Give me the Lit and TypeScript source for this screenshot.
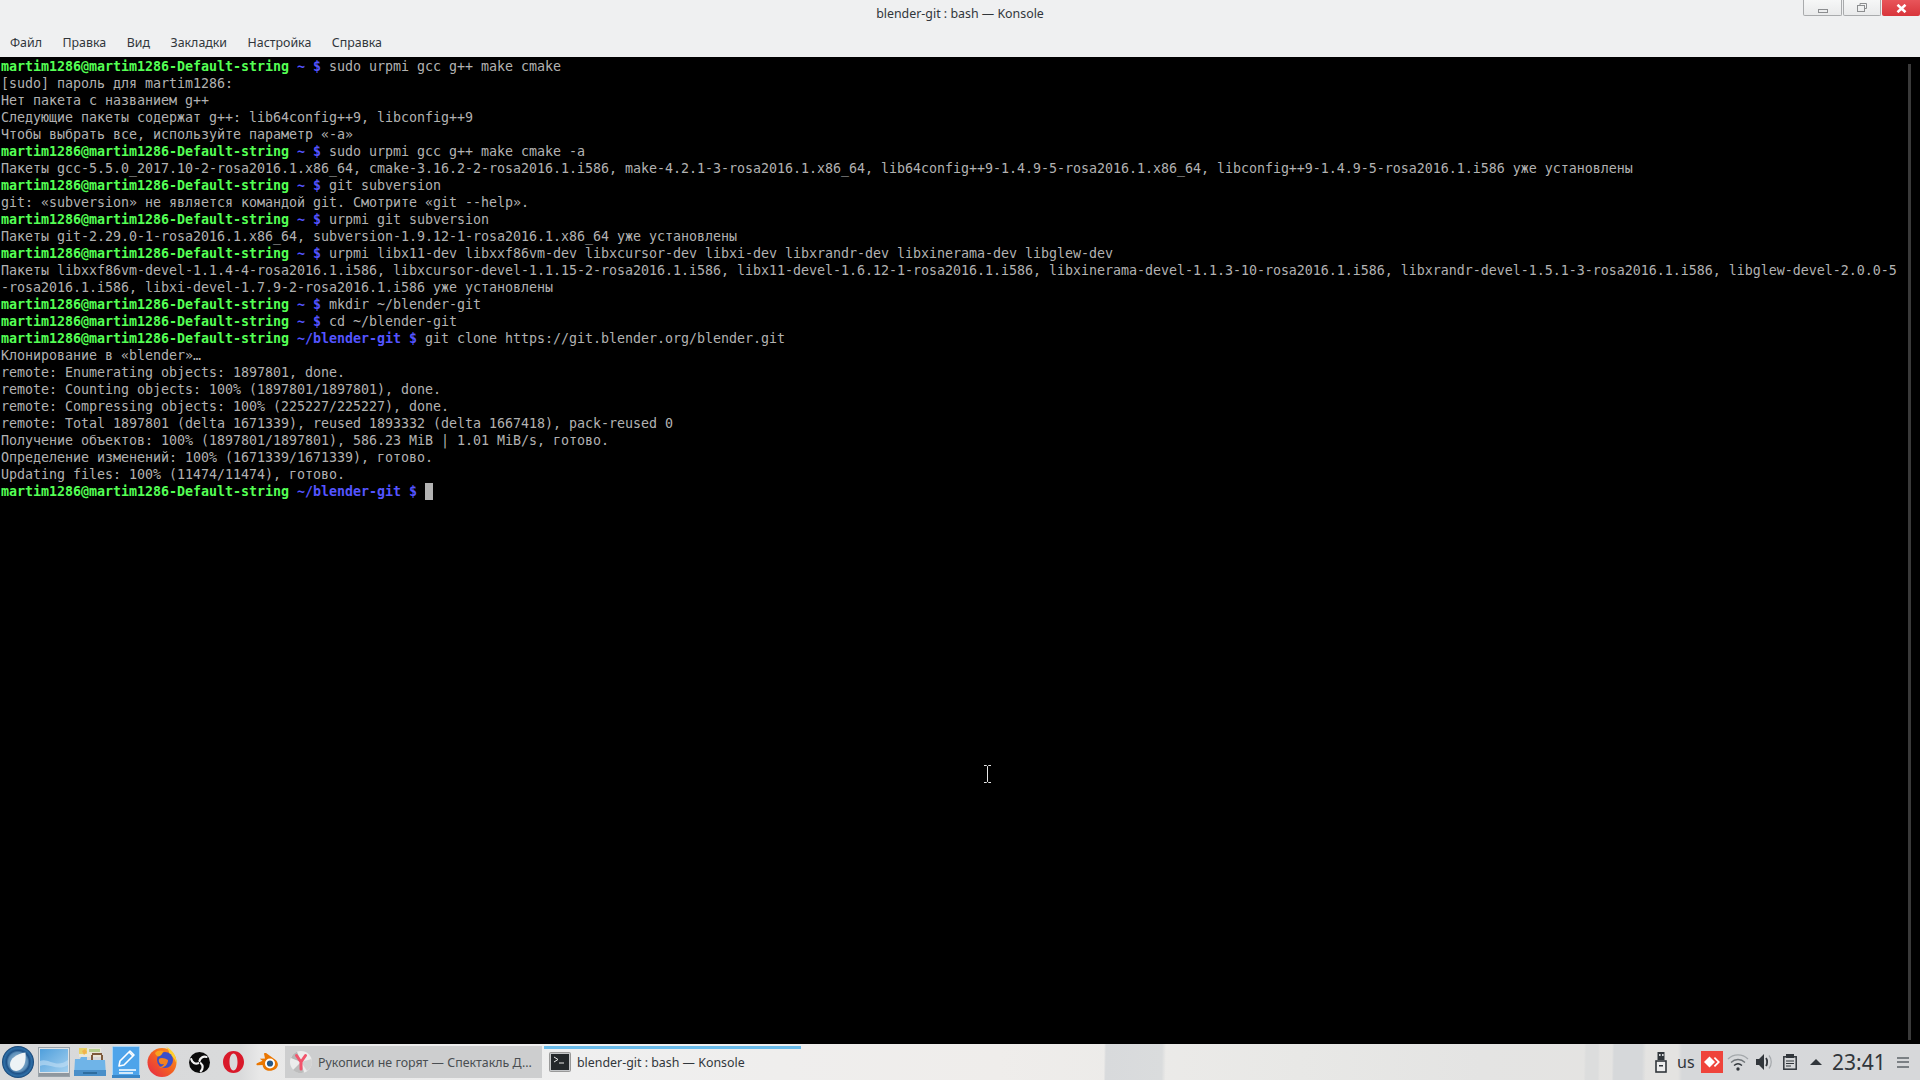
import { LitElement, html, css } from "lit";
import { customElement } from "lit/decorators.js";

type Line = string | { p: string; cmd?: string; cursor?: boolean };

const LINES: Line[] = [
  { p: "~", cmd: "sudo urpmi gcc g++ make cmake" },
  "[sudo] пароль для martim1286:",
  "Нет пакета с названием g++",
  "Следующие пакеты содержат g++: lib64config++9, libconfig++9",
  "Чтобы выбрать все, используйте параметр «-a»",
  { p: "~", cmd: "sudo urpmi gcc g++ make cmake -a" },
  "Пакеты gcc-5.5.0_2017.10-2-rosa2016.1.x86_64, cmake-3.16.2-2-rosa2016.1.i586, make-4.2.1-3-rosa2016.1.x86_64, lib64config++9-1.4.9-5-rosa2016.1.x86_64, libconfig++9-1.4.9-5-rosa2016.1.i586 уже установлены",
  { p: "~", cmd: "git subversion" },
  "git: «subversion» не является командой git. Смотрите «git --help».",
  { p: "~", cmd: "urpmi git subversion" },
  "Пакеты git-2.29.0-1-rosa2016.1.x86_64, subversion-1.9.12-1-rosa2016.1.x86_64 уже установлены",
  { p: "~", cmd: "urpmi libx11-dev libxxf86vm-dev libxcursor-dev libxi-dev libxrandr-dev libxinerama-dev libglew-dev" },
  "Пакеты libxxf86vm-devel-1.1.4-4-rosa2016.1.i586, libxcursor-devel-1.1.15-2-rosa2016.1.i586, libx11-devel-1.6.12-1-rosa2016.1.i586, libxinerama-devel-1.1.3-10-rosa2016.1.i586, libxrandr-devel-1.5.1-3-rosa2016.1.i586, libglew-devel-2.0.0-5",
  "-rosa2016.1.i586, libxi-devel-1.7.9-2-rosa2016.1.i586 уже установлены",
  { p: "~", cmd: "mkdir ~/blender-git" },
  { p: "~", cmd: "cd ~/blender-git" },
  { p: "~/blender-git", cmd: "git clone https://git.blender.org/blender.git" },
  "Клонирование в «blender»…",
  "remote: Enumerating objects: 1897801, done.",
  "remote: Counting objects: 100% (1897801/1897801), done.",
  "remote: Compressing objects: 100% (225227/225227), done.",
  "remote: Total 1897801 (delta 1671339), reused 1893332 (delta 1667418), pack-reused 0",
  "Получение объектов: 100% (1897801/1897801), 586.23 MiB | 1.01 MiB/s, готово.",
  "Определение изменений: 100% (1671339/1671339), готово.",
  "Updating files: 100% (11474/11474), готово.",
  { p: "~/blender-git", cursor: true },
];

const MENU = ["Файл", "Правка", "Вид", "Закладки", "Настройка", "Справка"];

const launcherIcon = html`<svg width="32" height="32" viewBox="0 0 32 32"><defs><radialGradient id="lg" cx=".5" cy=".5" r=".5"><stop offset="0" stop-color="#aac6dc"/><stop offset=".6" stop-color="#5d8fb9"/><stop offset=".72" stop-color="#1f5288"/><stop offset=".88" stop-color="#2f70a8"/><stop offset="1" stop-color="#123f70"/></radialGradient></defs><circle cx="16" cy="16" r="16" fill="url(#lg)"/><path d="M23.500 6.500C24 13 23.500 20 18.500 23.500C14 26.500 8 24.500 8 18.500C8 12.500 15 7.500 23.500 6.500Z" fill="#eef3f6"/></svg>`;
const desktopIcon = html`<svg width="32" height="30" viewBox="0 0 32 30"><defs><linearGradient id="dg" x1="0" y1="0" x2="1" y2="1"><stop offset="0" stop-color="#4f9fdc"/><stop offset="1" stop-color="#a4d0ef"/></linearGradient></defs><rect x=".5" y=".5" width="31" height="29" fill="#dfe3e6" stroke="#9aa3aa"/><rect x="2" y="2" width="28" height="23" fill="url(#dg)"/><path d="M2 14C10 10 18 22 30 13V18C20 25 10 15 2 19Z" fill="#c3e0f5" opacity=".6"/><rect x="1" y="26" width="30" height="3" fill="#8f979e"/></svg>`;
const folderIcon = html`<svg width="32" height="32" viewBox="0 0 32 32"><path d="M5 11V2H27V11Z" fill="#e8e6d8"/><path d="M5 2H13V8H5Z" fill="#e8d36a"/><path d="M8 5L11 3L13 6L10 9Z" fill="#f2b24a"/><rect x="15" y="3" width="11" height="3" fill="#b5cd8c"/><path d="M18 9V14M28 9V14" stroke="#7d5a3c" stroke-width="2"/><path d="M18 8H28" stroke="#7d5a3c" stroke-width="2"/><path d="M1 13L6 13L7 11L13 11V14L31 14L32 30H0Z" fill="#6fb4e8"/><path d="M0 24H32V30H0Z" fill="#4a8fc9"/><rect x="9" y="26" width="14" height="2" fill="#2f6d9f"/></svg>`;
const editIcon = html`<svg width="28" height="32" viewBox="0 0 28 32"><rect x=".5" y=".5" width="27" height="31" rx="1" fill="#4ea4ea" stroke="#a9d4f4"/><path d="M7 20L8 15L18 5L22 9L12 19Z" fill="#4ea4ea" stroke="#fff" stroke-width="1.600" stroke-linejoin="round"/><path d="M17 6L21 10" stroke="#fff" stroke-width="1.600"/><path d="M7 24H24M7 27H21" stroke="#fff" stroke-width="1.300"/><rect x="0" y="29" width="28" height="3" fill="#3a86c6"/></svg>`;
const firefoxIcon = html`<svg width="30" height="30" viewBox="0 0 30 30"><defs><linearGradient id="ff" x1="0" y1="1" x2="1" y2="0"><stop offset="0" stop-color="#e6254a"/><stop offset=".55" stop-color="#f4651f"/><stop offset="1" stop-color="#ff9c1f"/></linearGradient></defs><circle cx="15" cy="15.500" r="14.500" fill="url(#ff)"/><path d="M19 0C25 2 30 9 29.500 17C28 11 25 9 22 8C23 5 21 2 19 0Z" fill="#ffcf2e"/><circle cx="18" cy="13" r="8" fill="#3a4fc8"/><path d="M8 6C10 3 14 3 17 4C15 6 15 8 13 9C11 10 9 9 8 6Z" fill="#f9a11e"/><path d="M12 12C14 10 18 11 21 13C21 18 17 21 12 21C15 19 17 18 17 17C14 18 11 16 12 12Z" fill="#f4821f"/></svg>`;
const obsIcon = html`<svg width="21" height="21" viewBox="0 0 21 21"><circle cx="10.500" cy="10.500" r="10.500" fill="#0a0a0a"/><g fill="none" stroke="#f2f2f2" stroke-width="2.200" stroke-linecap="round"><path d="M10.500 9C11 6 14 4 17.500 5"/><path d="M10.500 9C11 6 14 4 17.500 5" transform="rotate(120 10.500 10.500)"/><path d="M10.500 9C11 6 14 4 17.500 5" transform="rotate(240 10.500 10.500)"/></g></svg>`;
const operaIcon = html`<svg width="21" height="22" viewBox="0 0 21 22"><path fill-rule="evenodd" d="M10.500 0C16.300 0 21 4.900 21 11S16.300 22 10.500 22S0 17.100 0 11S4.700 0 10.500 0ZM10.500 2.600C8 2.600 6.500 6.300 6.500 11S8 19.400 10.500 19.400S14.500 15.700 14.500 11S13 2.600 10.500 2.600Z" fill="#d9192a"/></svg>`;
const blenderIcon = html`<svg width="23" height="18" viewBox="0 0 23 18"><path d="M10 0L19 6.500C22.500 9 23 13.500 19.500 16C16 18.500 10.500 18.500 8 15.500C7 14.200 6.600 13.200 6.700 12L1.500 12.200C.3 12.200 0 10.800 1 10.300L6.500 7.800L3.800 5.800L9 5.600L8 .8C8.200 0 9.300-.3 10 0Z" fill="#ea7600"/><circle cx="14" cy="10.500" r="5" fill="#fff"/><circle cx="14" cy="10.500" r="3.100" fill="#265787"/></svg>`;
const yandexIcon = html`<svg width="22" height="22" viewBox="0 0 22 22"><circle cx="11" cy="11" r="11" fill="#ececec"/><path d="M1 7A11 11 0 0 1 7 .8L11 11Z" fill="#b5b5b5"/><path d="M3 19L11 11L14 21.500A11 11 0 0 1 3 19Z" fill="#bdbdbd"/><path d="M11 11L21.500 8A11 11 0 0 1 17 20Z" fill="#d2d2d2"/><path d="M6.500 4.500L11 11L15.500 4.500M11 11V18" fill="none" stroke="#f2546c" stroke-width="3" stroke-linecap="round" stroke-linejoin="round"/></svg>`;
const konsoleIcon = html`<svg width="22" height="20" viewBox="0 0 22 20"><rect x=".5" y=".5" width="21" height="19" rx="1" fill="#c4c6c8" stroke="#999"/><rect x="2" y="2" width="18" height="16" fill="#24282b"/><path d="M5 5L9 7.500L5 10" fill="none" stroke="#e8e8e8" stroke-width="1"/><path d="M10 11H15" stroke="#e8e8e8" stroke-width="1"/></svg>`;
const usbIcon = html`<svg width="12" height="22" viewBox="0 0 12 22"><path d="M2.500 1H9.500V9H2.500Z" fill="#31363b"/><rect x="4" y="3" width="1.600" height="2" fill="#d6d7d9"/><rect x="7" y="3" width="1.600" height="2" fill="#d6d7d9"/><rect x="1" y="10" width="10" height="11" fill="#eee" stroke="#31363b" stroke-width="1.600"/><rect x="4" y="14" width="4" height="1.500" fill="#31363b"/></svg>`;
const anydeskIcon = html`<svg width="22" height="22" viewBox="0 0 22 22"><rect width="22" height="22" fill="#ef443b"/><path d="M8.500 5.500L14 11L8.500 16.500L3 11Z" fill="#fff"/><path d="M14 6L19 11L14 16L12.800 14.800L16.600 11L12.800 7.200Z" fill="#fff"/></svg>`;
const wifiIcon = html`<svg width="22" height="18" viewBox="0 0 22 18"><path d="M1 6C6.500.5 15.500.5 21 6" fill="none" stroke="#a4a8ab" stroke-width="1.300"/><path d="M4 9.500C8 5.500 14 5.500 18 9.500" fill="none" stroke="#6f7478" stroke-width="1.300"/><path d="M7 12.500C9.500 10.300 12.500 10.300 15 12.500" fill="none" stroke="#31363b" stroke-width="1.300"/><circle cx="11" cy="16" r="1.700" fill="#31363b"/></svg>`;
const volumeIcon = html`<svg width="17" height="16" viewBox="0 0 17 16"><path d="M0 5H3L8 0V16L3 11H0Z" fill="#31363b"/><path d="M10 4C11.500 6 11.500 10 10 12" fill="none" stroke="#31363b" stroke-width="1.800"/><path d="M13 1.500C16 5 16 11 13 14.500" fill="none" stroke="#a4a8ab" stroke-width="1.200"/></svg>`;
const clipIcon = html`<svg width="14" height="16" viewBox="0 0 14 16"><rect x=".8" y="2.800" width="12.400" height="12.400" fill="none" stroke="#31363b" stroke-width="1.500"/><rect x="3" y="0" width="8" height="4" fill="#31363b"/><path d="M3 7H11M3 9.500H11M3 12H8" stroke="#31363b" stroke-width="1.200"/></svg>`;

@customElement("app-root")
export class AppRoot extends LitElement {
  static styles = css`
    :host {
      display: flex;
      flex-direction: column;
      width: 1920px;
      height: 1080px;
      overflow: hidden;
      position: relative;
      font-family: "Noto Sans", sans-serif;
      font-size: 12.4px;
      color: #31363b;
      background: #eff0f1;
    }
    .titlebar {
      height: 28px;
      display: grid;
      grid-template-columns: 1fr auto 1fr;
      align-items: start;
    }
    .title { line-height: 27px; }
    .winbtns { justify-self: end; display: flex; gap: 1px; height: 16px; }
    .wb {
      width: 38px;
      height: 16px;
      box-sizing: border-box;
      border: 1px solid #a9abad;
      border-top: none;
      border-radius: 0 0 2px 2px;
      background: linear-gradient(#f6f7f7, #e9eaeb);
      display: flex;
      align-items: center;
      justify-content: center;
    }
    .wb.first { width: 39px; }
    .wb.close {
      border: none;
      background: linear-gradient(#e8555a, #d8353b);
    }
    .menubar {
      height: 28px;
      padding: 0 0 1px 10px;
      display: flex;
      gap: 20.5px;
      align-items: center;
    }
    .term {
      flex: 1;
      background: #000;
      padding: 1px 0 0 1px;
      font-family: "DejaVu Sans Mono", monospace;
      font-size: 13.33px;
      letter-spacing: -0.025px;
      line-height: 17px;
      color: #b2b2b2;
      position: relative;
      overflow: hidden;
    }
    .line { height: 17px; white-space: pre; }
    .g { color: #54ff54; font-weight: 700; }
    .b { color: #5454ff; font-weight: 700; }
    .cur {
      display: inline-block;
      width: 8px;
      height: 17px;
      background: #b2b2b2;
      vertical-align: top;
    }
    .scroll {
      position: absolute;
      left: 1908px;
      top: 7px;
      bottom: 4px;
      width: 3px;
      background: #3a3a3a;
    }
    .ibeam { position: absolute; left: 983px; top: 708px; }
    .taskbar {
      height: 36px;
      display: flex;
      align-items: center;
      background:
        linear-gradient(91deg, transparent 1104px, #d8dadc 1106px, #dadcdd 1162px, transparent 1166px),
        linear-gradient(91deg, transparent 1584px, #dcdddd 1586px, #dcdddd 1598px, transparent 1600px),
        linear-gradient(91deg, transparent 1612px, #d6d8da 1614px, #d6d8da 1642px, transparent 1646px),
        linear-gradient(90deg, #d8d9da 0, #d9dadb 240px, #e8e8e8 260px, #efefef 560px, #efedeb 1000px, #e8e8e6 1300px, #e4e4e3 1480px, #e4e3e1 1678px, #d6d8da 1682px, #d7d8da 1920px);
    }
    .launchers { display: flex; align-items: center; padding-left: 2px; width: 285px; flex: none; box-sizing: border-box; }
    .ic { display: flex; align-items: center; justify-content: center; flex: none; }
    .ic svg { display: block; }
    .tab {
      height: 32px;
      width: 257px;
      flex: none;
      box-sizing: border-box;
      display: flex;
      align-items: center;
      gap: 6px;
      padding-left: 5px;
      color: #4a4e52;
      white-space: nowrap;
      margin-right: 2px;
    }
    .tab.inactive { background: #cdcecf; }
    .tab.active { border-top: 3px solid #69bbea; padding-bottom: 3px; color: #31363b; }
    .tray { margin-left: auto; display: flex; align-items: center; height: 36px; color: #31363b; }
    .us { font-size: 16px; margin-left: 10px; width: 24px; }
    .clock { font-size: 21px; width: 53px; margin-left: 10px; }
    .menu { width: 12px; height: 11px; margin: 0 11px 0 12px; display: flex; flex-direction: column; justify-content: space-between; }
    .menu i { display: block; height: 2px; background: #7b8084; }
    .tri {
      width: 0; height: 0;
      border-left: 6px solid transparent;
      border-right: 6px solid transparent;
      border-bottom: 6px solid #31363b;
      margin-left: 13px;
    }
  `;

  private renderLine(l: Line) {
    if (typeof l === "string") return html`<div class="line">${l}</div>`;
    return html`<div class="line"><span class="g">martim1286@martim1286-Default-string</span><span class="b"> ${l.p} $</span> ${l.cmd ?? ""}${l.cursor ? html`<span class="cur"></span>` : ""}</div>`;
  }

  render() {
    return html`
      <div class="titlebar">
        <div></div>
        <div class="title">blender-git : bash — Konsole</div>
        <div class="winbtns">
          <div class="wb first"><svg width="10" height="4" viewBox="0 0 10 4" style="margin-top:6px"><rect x=".5" y=".5" width="9" height="3" fill="none" stroke="#8c8e90"/></svg></div>
          <div class="wb"><svg width="10" height="9" viewBox="0 0 10 9"><path d="M3 2.500V.5H9.500V5.500H7.500" fill="none" stroke="#8c8e90"/><rect x=".5" y="2.500" width="7" height="6" fill="none" stroke="#8c8e90"/></svg></div>
          <div class="wb close"><svg width="11" height="9" viewBox="0 0 11 9"><path d="M1.500 .8L9.500 8.200M9.500 .8L1.500 8.200" stroke="#fff" stroke-width="2.600"/></svg></div>
        </div>
      </div>
      <div class="menubar">${MENU.map((m) => html`<span>${m}</span>`)}</div>
      <div class="term">
        ${LINES.map((l) => this.renderLine(l))}
        <div class="scroll"></div>
        <svg class="ibeam" width="9" height="18" viewBox="0 0 9 18"><path d="M1 .5H3.500L4.500 1.500L5.500 .5H8M4.500 1.500V16.500M1 17.500H3.500L4.500 16.500L5.500 17.500H8" fill="none" stroke="#e8e8e8" stroke-width="1"/></svg>
      </div>
      <div class="taskbar">
        <div class="launchers">
          <div class="ic" style="width:32px">${launcherIcon}</div>
          <div class="ic" style="width:32px;margin-left:4px">${desktopIcon}</div>
          <div class="ic" style="width:32px;margin-left:4px">${folderIcon}</div>
          <div class="ic" style="width:28px;margin-left:6px">${editIcon}</div>
          <div class="ic" style="width:30px;margin-left:7px">${firefoxIcon}</div>
          <div class="ic" style="width:21px;margin-left:12px">${obsIcon}</div>
          <div class="ic" style="width:21px;margin-left:13px">${operaIcon}</div>
          <div class="ic" style="width:23px;margin-left:12px">${blenderIcon}</div>
        </div>
        <div class="tab inactive"><span class="ic">${yandexIcon}</span>Рукописи не горят — Спектакль Д...</div>
        <div class="tab active"><span class="ic">${konsoleIcon}</span>blender-git : bash — Konsole</div>
        <div class="tray">
          <span class="ic">${usbIcon}</span>
          <span class="us">us</span>
          <span class="ic">${anydeskIcon}</span>
          <span class="ic" style="margin-left:4px">${wifiIcon}</span>
          <span class="ic" style="margin-left:7px">${volumeIcon}</span>
          <span class="ic" style="margin-left:10px">${clipIcon}</span>
          <span class="tri"></span>
          <span class="clock">23:41</span>
          <span class="menu"><i></i><i></i><i></i></span>
        </div>
      </div>
    `;
  }
}
